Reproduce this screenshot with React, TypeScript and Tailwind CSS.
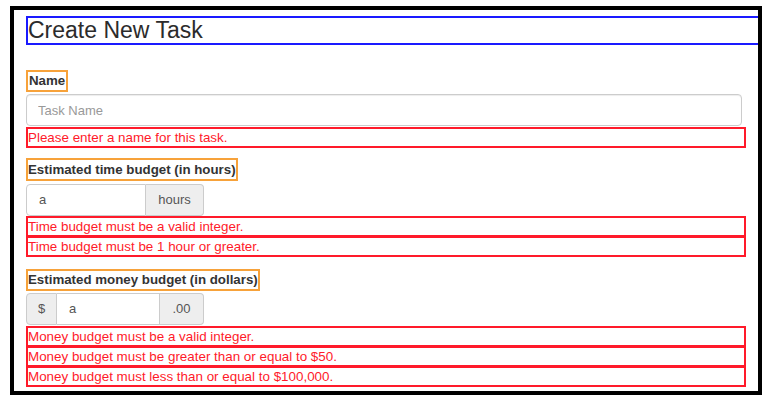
export default function App() {
  return (
    <div className="h-[404px] w-[776px] bg-white pl-[10px] pt-[6px] font-[family-name:'Liberation_Sans',Arial,sans-serif] text-[#333]">
      <div className="h-[389px] w-[752px] overflow-hidden border-4 border-black pl-[12px] pt-[6px]">
        <h1 className="h-[29px] w-[740px] border-2 border-[#1a1aff] text-[23px] leading-[25px] font-normal text-[#2b2b2b]">
          Create New Task
        </h1>

        <label className="mt-[25px] block h-[22px] w-fit border-2 border-[#f7a23a] px-px text-[13.3px] leading-[18px] font-bold">
          Name
        </label>
        <input
          className="mt-[2px] block h-[32px] w-[716px] rounded-[4px] border border-[#ccc] px-[11px] font-[family-name:'Liberation_Sans',Arial,sans-serif] text-[13px] text-[#555] shadow-[inset_0_1px_1px_rgba(0,0,0,0.075)] outline-none placeholder:text-[#999]"
          placeholder="Task Name"
        />
        <div className="mt-[1px]">
          <ErrorRow text="Please enter a name for this task." />
        </div>

        <label className="mt-[10px] block h-[23px] w-fit border-2 border-[#f7a23a] text-[13.3px] leading-[19px] font-bold">
          Estimated time budget (in hours)
        </label>
        <div className="mt-[3px] flex h-[32px] w-[178px] text-[13px] text-[#555]">
          <div className="flex w-[120px] items-center rounded-l-[4px] border border-[#ccc] px-[12px]">a</div>
          <div className="flex w-[58px] items-center justify-center rounded-r-[4px] border border-l-0 border-[#ccc] bg-[#eee]">
            hours
          </div>
        </div>
        <div>
          <ErrorRow text="Time budget must be a valid integer." />
          <ErrorRow text="Time budget must be 1 hour or greater." />
        </div>

        <label className="mt-[12px] block h-[22px] w-fit border-2 border-[#f7a23a] text-[13.3px] leading-[18px] font-bold">
          Estimated money budget (in dollars)
        </label>
        <div className="mt-[2px] flex h-[32px] w-[178px] text-[13px] text-[#555]">
          <div className="flex w-[31px] items-center justify-center rounded-l-[4px] border border-[#ccc] bg-[#eee]">$</div>
          <div className="flex w-[103px] items-center border border-l-0 border-[#ccc] px-[12px]">a</div>
          <div className="flex w-[44px] items-center justify-center rounded-r-[4px] border border-l-0 border-[#ccc] bg-[#eee]">
            .00
          </div>
        </div>
        <div className="mt-[1px]">
          <ErrorRow text="Money budget must be a valid integer." />
          <ErrorRow text="Money budget must be greater than or equal to $50." />
          <ErrorRow text="Money budget must less than or equal to $100,000." />
        </div>
      </div>
    </div>
  )
}

function ErrorRow({ text }: { text: string }) {
  return (
    <div className="-mt-px h-[21px] w-[720px] border-2 border-[#ff1a2a] text-[13.4px] leading-[17px] text-[#ff1a2a] first:mt-0">
      {text}
    </div>
  )
}
